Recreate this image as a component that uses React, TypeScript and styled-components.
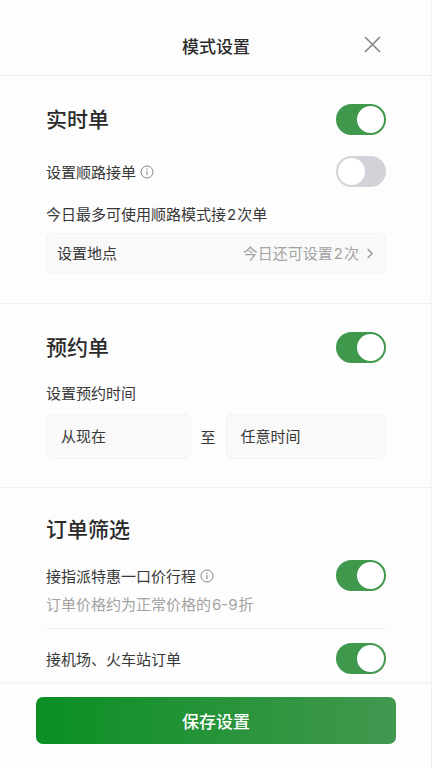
import React, { useState } from "react";
import styled, { createGlobalStyle } from "styled-components";

const GlobalStyle = createGlobalStyle`
  *, *::before, *::after {
    box-sizing: border-box;
  }
  body {
    margin: 0;
    background: #fdfdfd;
    color: #383838;
    font-family: "Noto Sans CJK SC", "Noto Sans", sans-serif;
    font-size: 15px;
    line-height: 22px;
  }
  button {
    margin: 0;
    font: inherit;
    color: inherit;
    cursor: pointer;
  }
  h1, h2, p {
    margin: 0;
  }
`;

const Page = styled.div`
  display: flex;
  flex-direction: column;
  min-height: 100vh;
  border-right: 1px solid #f4f4f4;
`;

const Header = styled.header`
  display: grid;
  grid-template-columns: 1fr auto 1fr;
  align-items: center;
  padding: 25px 45px 9px 46px;
  border-bottom: 1px solid #efefef;
`;

const Title = styled.h1`
  grid-column: 2;
  font-size: 17px;
  font-weight: 500;
  line-height: 24px;
  color: #2b2b2b;
`;

const CloseButton = styled.button`
  display: flex;
  justify-self: end;
  padding: 11px 5px 13px;
  border: 0;
  background: none;
  color: #868686;
`;

const Section = styled.section<{ $top?: number; $bottom?: number }>`
  padding: ${(p) => p.$top ?? 28}px 45px ${(p) => p.$bottom ?? 28}px 46px;

  & + & {
    border-top: 1px solid #efefef;
  }
`;

const Row = styled.div`
  display: flex;
  align-items: center;
  justify-content: space-between;
  min-height: 31px;
`;

const SectionTitle = styled.h2`
  padding-bottom: 2px;
  font-size: 21px;
  font-weight: 500;
  line-height: 29px;
  color: #2b2b2b;
`;

const LabelGroup = styled.div`
  display: flex;
  align-items: center;
  gap: 4px;
`;

const InfoButton = styled.button`
  display: flex;
  padding: 0;
  border: 0;
  background: none;
  color: #858585;
`;

const Text = styled.p<{ $muted?: boolean }>`
  color: ${(p) => (p.$muted ? "#a3a3a3" : "inherit")};
`;

const Count = styled.span`
  margin: 0 1px;
  font-family: Inter, "Noto Sans CJK SC", sans-serif;
`;

const Stack = styled.div<{ $gap: number }>`
  margin-top: ${(p) => p.$gap}px;
`;

const FieldButton = styled.button<{ $tall?: boolean }>`
  display: flex;
  align-items: center;
  width: 100%;
  height: ${(p) => (p.$tall ? 45 : 41)}px;
  padding: 0 ${(p) => (p.$tall ? "14px 2px" : "11px 1px 10px")};
  border: 1px solid #f3f3f3;
  border-radius: 6px;
  background: #f9f9f9;
  text-align: left;
`;

const FieldHint = styled.span`
  display: flex;
  align-items: center;
  gap: 8px;
  margin-left: auto;
  color: #a3a3a3;
`;

const TimeRange = styled.div`
  display: grid;
  grid-template-columns: 145fr auto 161fr;
  align-items: center;
  gap: 10px;
`;

const Divider = styled.hr`
  height: 1px;
  margin: 12px 0 14px;
  border: 0;
  background: #efefef;
`;

const Switch = styled.input`
  appearance: none;
  flex: none;
  display: flex;
  width: 50px;
  height: 31px;
  margin: 0;
  padding: 2px;
  border-radius: 16px;
  background: #d2d3d8;
  cursor: pointer;

  &::before {
    content: "";
    width: 27px;
    height: 27px;
    border-radius: 50%;
    background: #ffffff;
  }
  &:checked {
    justify-content: flex-end;
    background: #3f984c;
  }
`;

const Footer = styled.footer`
  position: sticky;
  bottom: 0;
  margin-top: auto;
  padding: 13px 35px 24px 36px;
  background: #fefefe;
  box-shadow: 0 -1px 4px rgba(0, 0, 0, 0.06);
`;

const SaveButton = styled.button`
  display: block;
  width: 100%;
  padding: 12px 0;
  border: 0;
  border-radius: 7px;
  background: linear-gradient(90deg, #0b8f24, #42984f);
  color: #ffffff;
  font-size: 17px;
  font-weight: 500;
  line-height: 23px;
`;

const CloseIcon = () => (
  <svg width="17" height="17" viewBox="0 0 17 17" fill="none" aria-hidden="true">
    <path d="M1 1L16 16M16 1L1 16" stroke="currentColor" strokeWidth="1.6" />
  </svg>
);

const InfoIcon = () => (
  <svg width="14" height="14" viewBox="0 0 14 14" fill="none" aria-hidden="true">
    <circle cx="7" cy="7" r="6" stroke="currentColor" strokeWidth="1" />
    <path d="M7 6V10.2" stroke="currentColor" strokeWidth="1" />
    <circle cx="7" cy="4.2" r="0.7" fill="currentColor" />
  </svg>
);

const ChevronIcon = () => (
  <svg width="7" height="11" viewBox="0 0 7 11" fill="none" aria-hidden="true">
    <path d="M0.6 1L5.2 5.5L0.6 10" stroke="#929292" strokeWidth="1.3" />
  </svg>
);

interface ToggleProps {
  id: string;
  initial?: boolean;
}

const Toggle = ({ id, initial = false }: ToggleProps) => {
  const [on, setOn] = useState(initial);
  return (
    <Switch
      id={id}
      type="checkbox"
      role="switch"
      checked={on}
      onChange={(e) => setOn(e.target.checked)}
    />
  );
};

export default function App() {
  return (
    <>
      <GlobalStyle />
      <Page>
        <Header>
          <Title>模式设置</Title>
          <CloseButton type="button" aria-label="关闭">
            <CloseIcon />
          </CloseButton>
        </Header>

        <main>
          <Section $bottom={29}>
            <Row>
              <SectionTitle>
                <label htmlFor="realtime">实时单</label>
              </SectionTitle>
              <Toggle id="realtime" initial />
            </Row>
            <Stack $gap={21}>
              <Row>
                <LabelGroup>
                  <label htmlFor="on-the-way">设置顺路接单</label>
                  <InfoButton type="button" aria-label="说明">
                    <InfoIcon />
                  </InfoButton>
                </LabelGroup>
                <Toggle id="on-the-way" />
              </Row>
            </Stack>
            <Stack $gap={16}>
              <Text>
                今日最多可使用顺路模式接<Count>2</Count>次单
              </Text>
            </Stack>
            <Stack $gap={7}>
              <FieldButton type="button">
                设置地点
                <FieldHint>
                  <span>
                    今日还可设置<Count>2</Count>次
                  </span>
                  <ChevronIcon />
                </FieldHint>
              </FieldButton>
            </Stack>
          </Section>

          <Section>
            <Row>
              <SectionTitle>
                <label htmlFor="reserved">预约单</label>
              </SectionTitle>
              <Toggle id="reserved" initial />
            </Row>
            <Stack $gap={19}>
              <Text>设置预约时间</Text>
            </Stack>
            <Stack $gap={10}>
              <TimeRange>
                <FieldButton type="button" $tall>
                  从现在
                </FieldButton>
                <span>至</span>
                <FieldButton type="button" $tall>
                  任意时间
                </FieldButton>
              </TimeRange>
            </Stack>
          </Section>

          <Section $top={26} $bottom={10}>
            <SectionTitle>订单筛选</SectionTitle>
            <Stack $gap={15}>
              <Row>
                <LabelGroup>
                  <label htmlFor="fixed-price">接指派特惠一口价行程</label>
                  <InfoButton type="button" aria-label="说明">
                    <InfoIcon />
                  </InfoButton>
                </LabelGroup>
                <Toggle id="fixed-price" initial />
              </Row>
            </Stack>
            <Stack $gap={2}>
              <Text $muted>
                订单价格约为正常价格的<Count>6-9</Count>折
              </Text>
            </Stack>
            <Divider />
            <Row>
              <label htmlFor="station">接机场、火车站订单</label>
              <Toggle id="station" initial />
            </Row>
          </Section>
        </main>

        <Footer>
          <SaveButton type="button">保存设置</SaveButton>
        </Footer>
      </Page>
    </>
  );
}
